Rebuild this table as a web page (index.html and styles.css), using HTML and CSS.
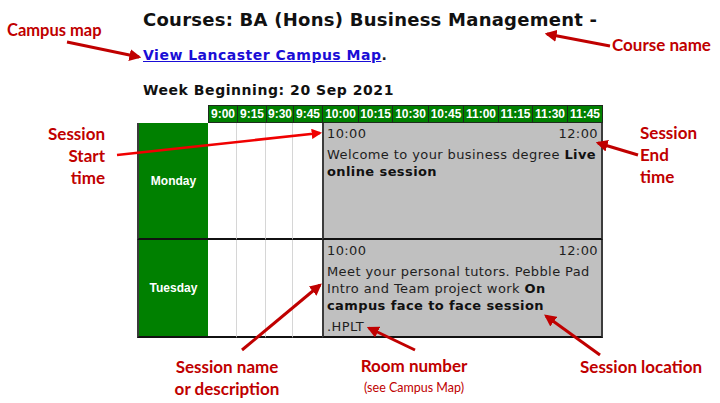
FILE: index.html
```html
<!DOCTYPE html>
<html lang="en">
<head>
<meta charset="utf-8">
<title>Timetable</title>
<link rel="stylesheet" href="styles.css">
</head>
<body>
<div class="page">
  <div class="main">
    <h1 class="title">Courses: BA (Hons) Business Management -</h1>
    <p class="maplink"><a href="#">View Lancaster Campus Map</a>.</p>
    <h2 class="week">Week Beginning: 20 Sep 2021</h2>
    <div class="timetable">
      <div class="corner"></div>
      <div class="th">9:00</div>
      <div class="th">9:15</div>
      <div class="th">9:30</div>
      <div class="th">9:45</div>
      <div class="th">10:00</div>
      <div class="th">10:15</div>
      <div class="th">10:30</div>
      <div class="th">10:45</div>
      <div class="th">11:00</div>
      <div class="th">11:15</div>
      <div class="th">11:30</div>
      <div class="th last">11:45</div>

      <div class="day">Monday</div>
      <div class="empty"></div>
      <div class="empty"></div>
      <div class="empty"></div>
      <div class="empty end"></div>
      <div class="session">
        <div class="times"><span>10:00</span><span>12:00</span></div>
        <div class="desc">Welcome to your business degree <b>Live online session</b></div>
      </div>

      <div class="day">Tuesday</div>
      <div class="empty"></div>
      <div class="empty"></div>
      <div class="empty"></div>
      <div class="empty end"></div>
      <div class="session">
        <div class="times"><span>10:00</span><span>12:00</span></div>
        <div class="desc">Meet your personal tutors. Pebble Pad Intro and Team project work <b>On campus face to face session</b></div>
        <div class="room">.HPLT</div>
      </div>
    </div>
  </div>

  <div class="note note-map">Campus map</div>
  <div class="note note-course">Course name</div>
  <div class="note note-start">Session<br>Start<br>time</div>
  <div class="note note-end">Session<br>End<br>time</div>
  <div class="note note-name">Session name<br>or description</div>
  <div class="note note-room">Room number<br><span class="small">(see Campus Map)</span></div>
  <div class="note note-loc">Session location</div>

  <svg class="arrows" width="720" height="403" viewBox="0 0 720 403">
    <defs>
      <marker id="hd" markerWidth="4" markerHeight="4" refX="3.2" refY="2" orient="auto" markerUnits="strokeWidth">
        <path d="M0,0 L4,2 L0,4 Z" fill="#c00000"/>
      </marker>
      <marker id="hr" markerWidth="4" markerHeight="4" refX="3.2" refY="2" orient="auto" markerUnits="strokeWidth">
        <path d="M0,0 L4,2 L0,4 Z" fill="#f00000"/>
      </marker>
    </defs>
    <g fill="none" stroke="#c00000" stroke-width="3">
      <line x1="67" y1="42" x2="139" y2="57" marker-end="url(#hd)"/>
      <line x1="610" y1="46" x2="547" y2="34" marker-end="url(#hd)"/>
      <line x1="638" y1="155" x2="598" y2="143" marker-end="url(#hd)"/>
      <line x1="242" y1="350" x2="320" y2="285" marker-end="url(#hd)"/>
      <line x1="415" y1="350" x2="369" y2="328" marker-end="url(#hd)"/>
      <line x1="600" y1="355" x2="546" y2="316" marker-end="url(#hd)"/>
    </g>
    <line x1="117" y1="155" x2="320" y2="133" stroke="#f00000" stroke-width="2.6" marker-end="url(#hr)"/>
  </svg>
</div>
</body>
</html>
```
FILE: styles.css
```css
html, body {
  margin: 0;
  padding: 0;
  background: #ffffff;
}

.page {
  position: relative;
  width: 720px;
  height: 403px;
  overflow: hidden;
  font-family: "DejaVu Sans", Verdana, sans-serif;
  color: #1a1a1a;
}

.main {
  padding-left: 137px;
  padding-top: 9px;
}

.title {
  margin: 0 0 0 6px;
  font-size: 18px;
  letter-spacing: 0.25px;
  line-height: 22px;
  font-weight: bold;
  color: #111;
  white-space: nowrap;
}

.maplink {
  margin: 15px 0 0 6px;
  font-size: 14px;
  letter-spacing: 0.5px;
  line-height: 18px;
  font-weight: bold;
}

.maplink a {
  color: #1a0dd6;
  text-decoration: underline;
}

.week {
  margin: 17px 0 0 6px;
  font-size: 14px;
  letter-spacing: 0.55px;
  line-height: 18px;
  font-weight: bold;
  color: #111;
}

.timetable {
  margin-top: 6px;
  display: grid;
  grid-template-columns: 71px 29px 29px 27px 29px 36px 34px 36px 35px 35px 34px 35px 36px;
  grid-template-rows: 18px 117px 98px;
  width: 466px;
}

.corner {
  background: #fff;
}

.th {
  background: #008000;
  color: #ffffff;
  font-family: "Liberation Sans", Arial, sans-serif;
  font-weight: bold;
  font-size: 12px;
  line-height: 16px;
  text-align: center;
  border-top: 1px solid #1f2a1f;
  border-bottom: 1px solid #1f2a1f;
  border-left: 1px solid #1f2a1f;
  white-space: nowrap;
  overflow: hidden;
}

.th.last {
  border-right: 1px solid #1f2a1f;
}

.day {
  background: #008000;
  color: #ffffff;
  font-family: "Liberation Sans", Arial, sans-serif;
  font-weight: bold;
  font-size: 12px;
  display: flex;
  align-items: center;
  justify-content: center;
  border-left: 2px solid #3a3a3a;
  border-bottom: 2px solid #111;
}

.empty {
  background: #fff;
  border-right: 1px solid #d6d6d6;
  border-bottom: 2px solid #111;
}

.empty.end {
  border-right: none;
}

.session {
  grid-column: span 8;
  background: #c0c0c0;
  border-left: 2px solid #3c3c3c;
  border-right: 2px solid #3c3c3c;
  border-bottom: 2px solid #111;
  padding: 2px 3px 0 3px;
  font-size: 13px;
  letter-spacing: 0.4px;
  line-height: 17px;
  color: #1e1e1e;
}

.times {
  display: flex;
  justify-content: space-between;
  margin-bottom: 4px;
}

.desc b {
  color: #111;
}

.room {
  margin-top: 4px;
}

.note {
  position: absolute;
  font-family: Lato, "Open Sans", sans-serif;
  font-weight: bold;
  font-size: 17px;
  line-height: 22px;
  color: #c00000;
  white-space: nowrap;
}

.note-map { left: 7px; top: 19px; font-size: 16.5px; }
.note-course { left: 612px; top: 34px; }
.note-start { right: 615px; top: 123px; text-align: right; }
.note-end { left: 640px; top: 122px; }
.note-name { left: 127px; width: 200px; top: 356px; text-align: center; }
.note-room { left: 314px; width: 200px; top: 356px; text-align: center; line-height: 20px; }
.note-loc { left: 580px; top: 356px; }

.small {
  font-weight: normal;
  font-size: 12.5px;
  line-height: 16px;
}

.arrows {
  position: absolute;
  left: 0;
  top: 0;
  pointer-events: none;
}
```
